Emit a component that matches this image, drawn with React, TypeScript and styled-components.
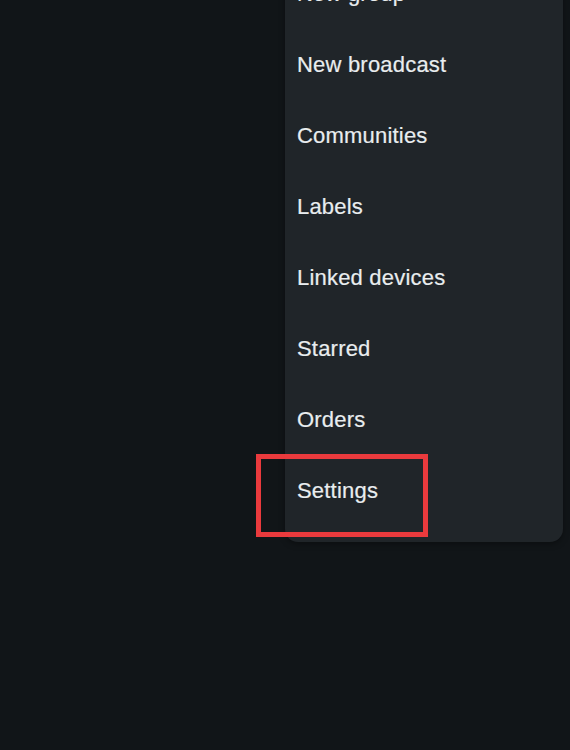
import styled, { createGlobalStyle } from 'styled-components';

const GlobalStyle = createGlobalStyle`
	html, body {
		margin: 0;
		padding: 0;
		background: #111518;
	}
	body {
		font-family: "Liberation Sans", Arial, sans-serif;
	}
`;

const items = [
	'New group',
	'New broadcast',
	'Communities',
	'Labels',
	'Linked devices',
	'Starred',
	'Orders',
	'Settings',
];

const App = () => {
	return (
		<>
			<GlobalStyle />
			<StyledPage>
				<StyledMenu>
					{items.map((label) => (
						<MenuItem key={label}>
							{label}
							{label === 'Settings' && <Highlight />}
						</MenuItem>
					))}
				</StyledMenu>
			</StyledPage>
		</>
	);
};

const StyledPage = styled.div`
	position: relative;
	width: 570px;
	height: 750px;
	overflow: hidden;
	background-color: #111518;
`;

const StyledMenu = styled.ul`
	position: absolute;
	top: -50px;
	left: 285px;
	width: 278px;
	margin: 0;
	padding: 8px 0 16px;
	list-style: none;
	background-color: #202529;
	border-radius: 0 0 13px 13px;
	box-shadow: 0 2px 6px rgba(0, 0, 0, 0.35);
`;

const MenuItem = styled.li`
	position: relative;
	display: flex;
	align-items: center;
	height: 71px;
	padding-left: 12px;
	font-size: 22px;
	color: #e9edef;
	letter-spacing: 0.2px;
	-webkit-text-stroke: 0.2px #e9edef;
`;

const Highlight = styled.span`
	position: absolute;
	left: -29px;
	top: -1px;
	width: 172px;
	height: 83px;
	box-sizing: border-box;
	border: 5px solid #ea3a3d;
	pointer-events: none;
`;

export default App;
